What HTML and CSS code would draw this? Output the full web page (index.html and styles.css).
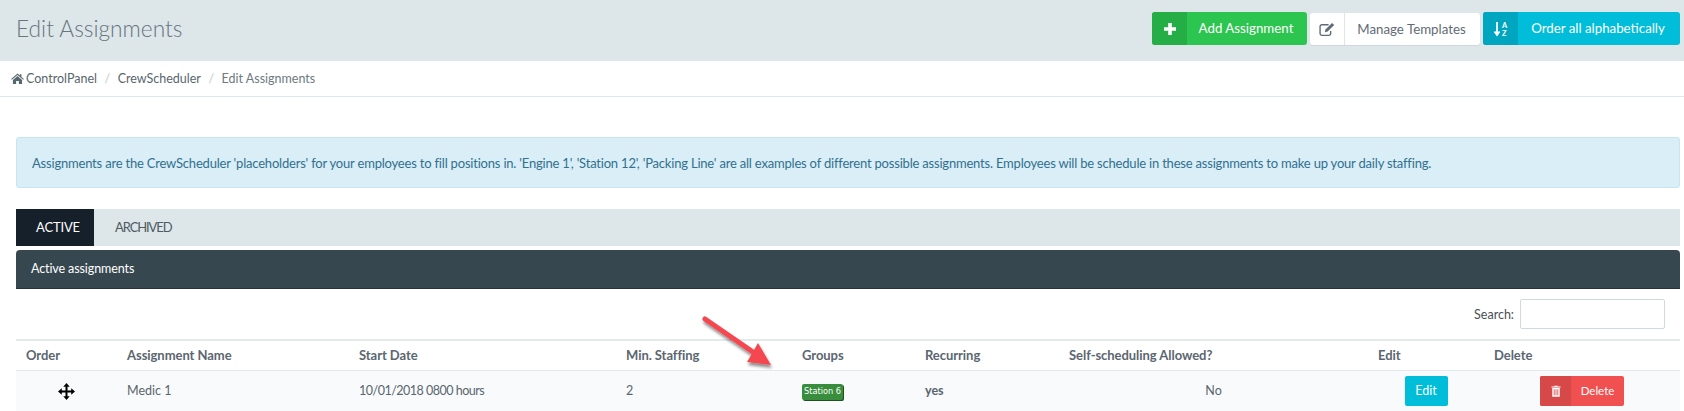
FILE: index.html
```html
<!DOCTYPE html>
<html lang="en">
<head>
<meta charset="utf-8">
<title>Edit Assignments</title>
<link rel="stylesheet" href="styles.css">
</head>
<body>
<header class="heading">
  <h1 class="title">Edit Assignments</h1>
  <div class="actions">
    <a class="btn btn-green"><span class="btn-icon"><svg class="ico" viewBox="0 0 14 14"><path d="M5.200 1h3.600v4.200H13v3.600H8.800V13H5.200V8.800H1V5.200h4.200z" fill="#fff"/></svg></span><span class="btn-text">Add Assignment</span></a>
    <a class="btn btn-white"><span class="btn-icon"><svg class="ico ico-edit" viewBox="0 0 16 14"><path d="M11 8.500v2.300A1.700 1.700 0 0 1 9.300 12.500H2.700A1.700 1.700 0 0 1 1 10.800V4.200A1.700 1.700 0 0 1 2.700 2.500H9" fill="none" stroke="#5f6b75" stroke-width="1.300"/><path d="M5.500 9.500l.6-2.600L12.300.8l2 2-6.200 6.100z" fill="#5f6b75"/></svg></span><span class="btn-text">Manage Templates</span></a>
    <a class="btn btn-cyan"><span class="btn-icon"><svg class="ico ico-sort" viewBox="0 0 16 16"><path d="M4 1v11.500M1.500 10.500L4 14l2.500-3.500" fill="none" stroke="#fff" stroke-width="1.800"/><text class="az" x="9" y="7">A</text><text class="az" x="9" y="15">Z</text></svg></span><span class="btn-text">Order all alphabetically</span></a>
  </div>
</header>

<nav class="crumbs">
  <svg class="home" viewBox="0 0 14 12"><path d="M7 .5l2.500 2.200V1.300h1.800v3L14 6.600l-.8.800L7 2.300.8 7.400 0 6.600zM2 7.600L7 3.400l5 4.200V12H8.500V8.800h-3V12H2z" fill="#58666e"/></svg>
  <span class="crumb">ControlPanel</span><span class="sep">/</span>
  <span class="crumb">CrewScheduler</span><span class="sep">/</span>
  <span class="crumb crumb-current">Edit Assignments</span>
</nav>

<main class="content">
  <div class="alert">Assignments are the CrewScheduler 'placeholders' for your employees to fill positions in. 'Engine 1', 'Station 12', 'Packing Line' are all examples of different possible assignments. Employees will be schedule in these assignments to make up your daily staffing.</div>

  <div class="tabs">
    <a class="tab tab-active">ACTIVE</a>
    <a class="tab tab-archived">ARCHIVED</a>
  </div>

  <section class="panel">
    <div class="panel-heading">Active assignments</div>
    <div class="search"><label class="search-label">Search:</label><input class="search-input" type="text"></div>
    <table class="grid">
      <thead>
        <tr>
          <th class="c-order">Order</th>
          <th class="c-name">Assignment Name</th>
          <th class="c-start">Start Date</th>
          <th class="c-min">Min. Staffing</th>
          <th class="c-groups">Groups</th>
          <th class="c-rec">Recurring</th>
          <th class="c-self">Self-scheduling Allowed?</th>
          <th class="c-edit">Edit</th>
          <th class="c-del">Delete</th>
        </tr>
      </thead>
      <tbody>
        <tr>
          <td class="center"><svg class="move" viewBox="0 0 17 17"><path d="M8.500 0l3.200 3.800H9.500v3.700h3.700V5.300L17 8.500l-3.800 3.200V9.500H9.500v3.700h2.200L8.500 17l-3.200-3.800h2.200V9.500H3.800v2.200L0 8.500l3.800-3.200v2.200h3.700V3.800H5.300z" fill="#000"/></svg></td>
          <td>Medic 1</td>
          <td class="date">10/01/2018 0800 hours</td>
          <td>2</td>
          <td><span class="badge">Station 6</span></td>
          <td class="strong">yes</td>
          <td class="center">No</td>
          <td class="center"><a class="btn-small">Edit</a></td>
          <td class="center"><a class="btn-del"><span class="del-icon"><svg class="trash" viewBox="0 0 12 14"><path d="M4 1.500V.7h4v.8h3.500v1.300H.5V1.500zM1.500 3.500h9V14h-9zM3.300 5v7h1V5zm2.200 0v7h1V5zm2.200 0v7h1V5z" fill="#fff" fill-rule="evenodd"/></svg></span><span class="del-text">Delete</span></a></td>
        </tr>
      </tbody>
    </table>
  </section>
</main>

<svg class="arrow" viewBox="0 0 90 90">
  <defs><filter id="sh" x="-20%" y="-20%" width="150%" height="150%"><feDropShadow dx="1" dy="3" stdDeviation="1.500" flood-color="#000" flood-opacity=".45"/></filter></defs>
  <g filter="url(#sh)"><path d="M8 7L56 40" stroke="#f4474f" stroke-width="5" stroke-linecap="round" fill="none"/><path d="M74 53L50 50 61 31z" fill="#f4474f"/></g>
</svg>
</body>
</html>
```
FILE: styles.css
```css
* { box-sizing: border-box; }
html, body { margin: 0; padding: 0; }
body {
  position: relative;
  height: 411px;
  overflow: hidden;
  background: #fff;
  font-family: "Lato", "Noto Sans", sans-serif;
  font-size: 13px;
  color: #58666e;
}
.heading {
  display: flex;
  align-items: center;
  justify-content: space-between;
  height: 61px;
  padding: 0 4px 4px 16px;
  background: #dde6e9;
}
.title {
  margin: 0;
  font-size: 22.700px;
  font-weight: 300;
  color: #66757e;
}
.actions { display: flex; gap: 3px; }
.btn {
  display: flex;
  height: 33px;
  border-radius: 3px;
  overflow: hidden;
  font-size: 13.300px;
  line-height: 33px;
}
.btn-icon { display: flex; align-items: center; justify-content: center; width: 35px; }
.btn-text { flex: 1; padding-right: 2px; text-align: center; }
.btn-green { width: 155px; background: #2bc54f; color: #fff; }
.btn-green .btn-icon { background: #25ae45; }
.btn-white { width: 170px; margin-top: 1px; height: 32px; background: #fff; color: #5f6b75; box-shadow: 0 1px 0 #cfd9dd; }
.btn-white .btn-icon { border-right: 1px solid #dde6e9; }
.btn-cyan { width: 197px; background: #00bed9; color: #fff; }
.btn-cyan .btn-icon { background: #00a6bf; }
.ico { width: 14px; height: 14px; }
.ico-edit { width: 17px; height: 15px; }
.ico-sort { width: 16px; height: 16px; }
.az { font-size: 7.500px; font-weight: 700; fill: #fff; }
.crumbs {
  display: flex;
  align-items: center;
  height: 36px;
  padding-left: 11px;
  border-bottom: 1px solid #dde6e9;
  font-size: 12.500px;
  color: #58666e;
}
.home { width: 13px; height: 11px; margin-right: 2px; }
.sep { padding: 0 7.500px; color: #c5ccd0; }
.crumb-current { color: #6d7a82; }
.content { padding: 40px 4px 0 16px; }
.alert {
  height: 51px;
  padding: 0 15px;
  line-height: 50px;
  background: #d9eef7;
  border: 1px solid #c5e5f0;
  border-radius: 3px;
  color: #31708f;
  font-size: 13px;
  letter-spacing: -.2px;
  white-space: nowrap;
  overflow: hidden;
}
.tabs {
  display: flex;
  height: 37px;
  margin-top: 21px;
  background: #dde6e9;
  font-size: 13px;
  line-height: 37px;
}
.tab { padding: 0 20px; color: #4f5a61; }
.tab-active { width: 78px; background: #16202a; color: #fff; letter-spacing: -.15px; }
.tab-archived { padding-left: 21px; letter-spacing: -1.100px; }
.panel { margin-top: 4px; }
.panel-heading {
  height: 39px;
  padding-left: 15px;
  line-height: 37px;
  background: #37474f;
  border-bottom: 1px solid #263238;
  border-radius: 4px 4px 0 0;
  color: #fff;
  font-size: 12.500px;
  letter-spacing: -.1px;
}
.search {
  display: flex;
  justify-content: flex-end;
  align-items: center;
  gap: 6px;
  height: 50px;
  padding-right: 15px;
  color: #4a4f54;
  font-size: 12.500px;
}
.search-input {
  width: 145px;
  height: 30px;
  border: 1px solid #cfdadd;
  border-radius: 2px;
  background: #fff;
}
.grid {
  table-layout: fixed;
  width: 100%;
  border-collapse: collapse;
  border-top: 2px solid #e4eaec;
}
.grid th, .grid td { padding: 0 10px; text-align: left; overflow: hidden; white-space: nowrap; }
.grid th { height: 30px; font-weight: 700; letter-spacing: -.05px; color: #5b6670; border-bottom: 1px solid #e4eaec; }
.grid td { height: 41px; font-size: 12.500px; background: #f9fafb; border-bottom: 1px solid #e9edef; }
.grid td.center { text-align: center; }
.grid td.strong { font-weight: 700; }
.grid td.date { letter-spacing: -.5px; }
.c-order { width: 101px; }
.c-name { width: 232px; }
.c-start { width: 267px; }
.c-min { width: 176px; }
.c-groups { width: 123px; }
.c-rec { width: 144px; }
.c-self { width: 309px; }
.c-edit { width: 116px; }
.c-del { width: 196px; }
.move { display: block; width: 17px; height: 17px; margin: 2px auto 0; }
.badge {
  display: inline-block;
  padding: 0 2px;
  height: 16px;
  line-height: 15px;
  font-family: "DejaVu Sans", sans-serif;
  font-size: 8.200px;
  color: #fff;
  background: #388e3c;
  border-radius: 2px;
  box-shadow: 1px 1px 0 #1f4f22;
}
.btn-small {
  display: inline-block;
  width: 43px;
  height: 30px;
  line-height: 30px;
  text-align: center;
  color: #fff;
  background: #00bed9;
  border-radius: 2px;
}
.btn-del {
  display: inline-flex;
  width: 84px;
  height: 30px;
  line-height: 30px;
  border-radius: 2px;
  overflow: hidden;
  color: #fff;
  background: #f05050;
  vertical-align: middle;
}
.del-icon { display: flex; align-items: center; justify-content: center; width: 31px; background: #d74848; }
.del-text { flex: 1; text-align: center; font-size: 11.500px; }
.trash { width: 10px; height: 12px; }
.arrow { position: absolute; left: 697px; top: 312px; width: 90px; height: 90px; }
```
